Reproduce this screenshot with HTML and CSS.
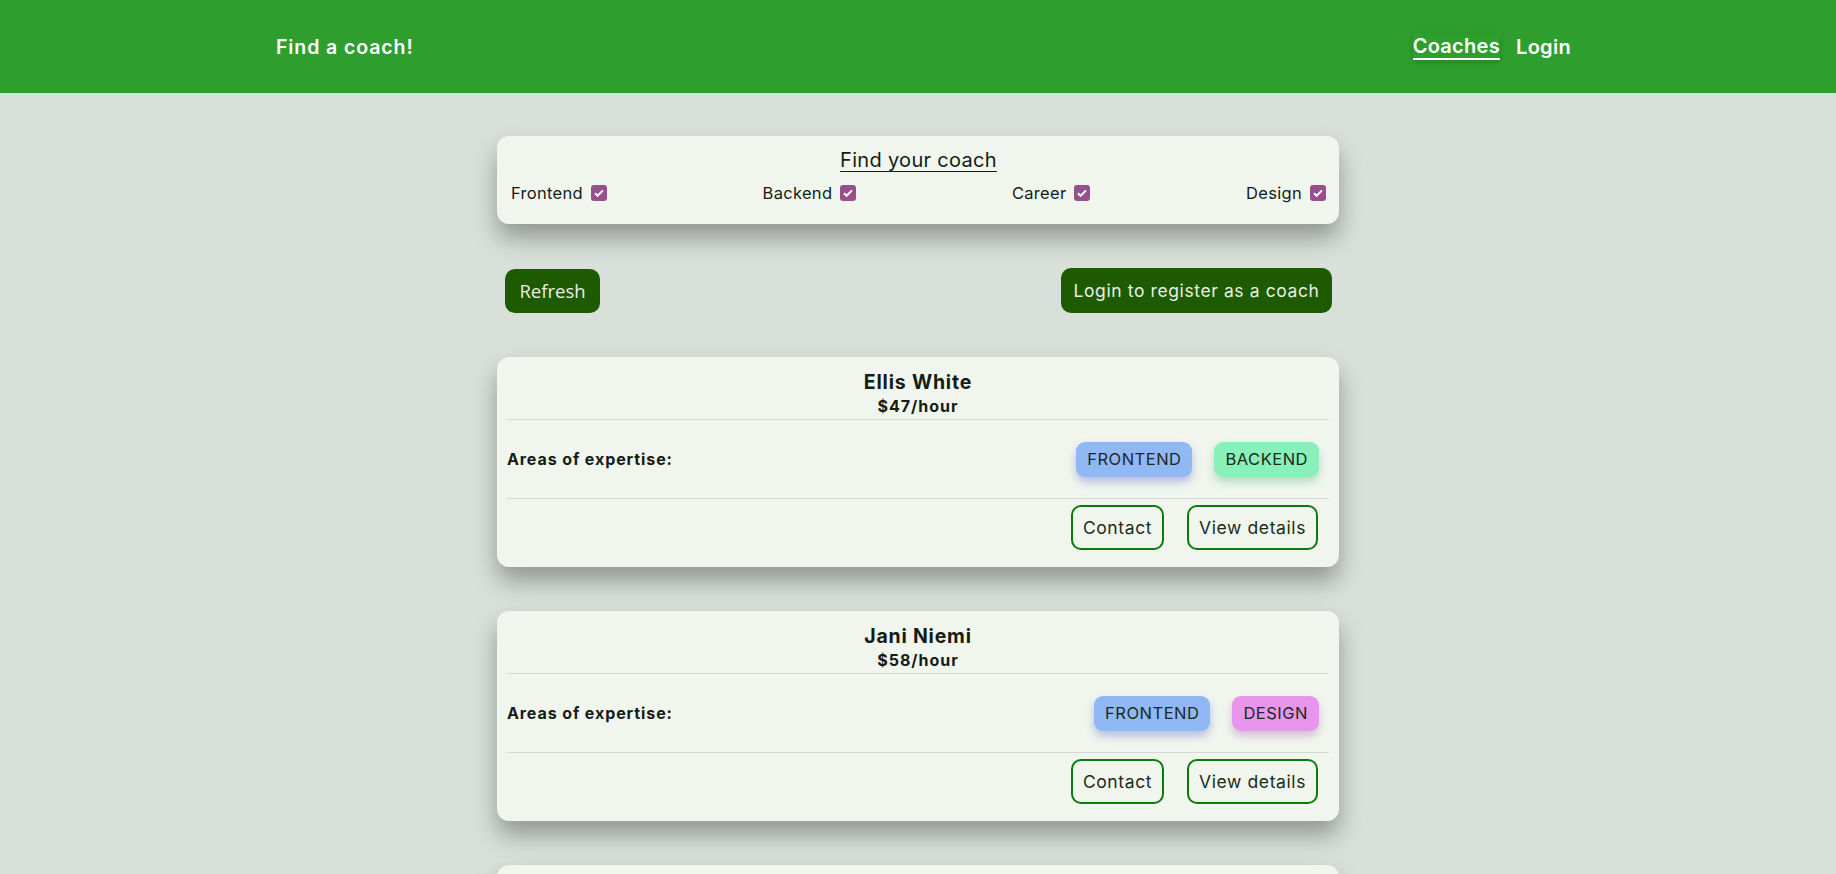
FILE: index.html
```html
<!DOCTYPE html>
<html lang="en">
<head>
<meta charset="utf-8">
<title>Find a coach</title>
<link rel="stylesheet" href="styles.css">
</head>
<body>
<header class="site-header">
  <h1 class="brand">Find a coach!</h1>
  <nav class="nav">
    <a class="nav-link active" href="#">Coaches</a>
    <a class="nav-link" href="#">Login</a>
  </nav>
</header>
<main class="main">
  <section class="card filter">
    <h2 class="filter-title">Find your coach</h2>
    <div class="filter-row">
      <label class="filter-item">Frontend <span class="check"><svg viewBox="0 0 16 16"><path d="M4 8.2l2.6 2.6L12 5.4" fill="none" stroke="#fff" stroke-width="2"/></svg></span></label>
      <label class="filter-item">Backend <span class="check"><svg viewBox="0 0 16 16"><path d="M4 8.2l2.6 2.6L12 5.4" fill="none" stroke="#fff" stroke-width="2"/></svg></span></label>
      <label class="filter-item">Career <span class="check"><svg viewBox="0 0 16 16"><path d="M4 8.2l2.6 2.6L12 5.4" fill="none" stroke="#fff" stroke-width="2"/></svg></span></label>
      <label class="filter-item">Design <span class="check"><svg viewBox="0 0 16 16"><path d="M4 8.2l2.6 2.6L12 5.4" fill="none" stroke="#fff" stroke-width="2"/></svg></span></label>
    </div>
  </section>

  <div class="controls">
    <button class="btn-solid btn-refresh">Refresh</button>
    <a class="btn-solid btn-login" href="#">Login to register as a coach</a>
  </div>

  <section class="card coach">
    <div class="coach-head">
      <h3 class="coach-name">Ellis White</h3>
      <h4 class="coach-rate">$47/hour</h4>
    </div>
    <div class="coach-areas">
      <span class="areas-label">Areas of expertise:</span>
      <div class="badges">
        <span class="badge frontend">FRONTEND</span>
        <span class="badge backend">BACKEND</span>
      </div>
    </div>
    <div class="coach-actions">
      <a class="btn-outline" href="#">Contact</a>
      <a class="btn-outline" href="#">View details</a>
    </div>
  </section>

  <section class="card coach">
    <div class="coach-head">
      <h3 class="coach-name">Jani Niemi</h3>
      <h4 class="coach-rate">$58/hour</h4>
    </div>
    <div class="coach-areas">
      <span class="areas-label">Areas of expertise:</span>
      <div class="badges">
        <span class="badge frontend">FRONTEND</span>
        <span class="badge design">DESIGN</span>
      </div>
    </div>
    <div class="coach-actions">
      <a class="btn-outline" href="#">Contact</a>
      <a class="btn-outline" href="#">View details</a>
    </div>
  </section>

  <section class="card coach">
    <div class="coach-head">
      <h3 class="coach-name">Kim Hall</h3>
      <h4 class="coach-rate">$40/hour</h4>
    </div>
    <div class="coach-areas">
      <span class="areas-label">Areas of expertise:</span>
      <div class="badges">
        <span class="badge career">CAREER</span>
      </div>
    </div>
    <div class="coach-actions">
      <a class="btn-outline" href="#">Contact</a>
      <a class="btn-outline" href="#">View details</a>
    </div>
  </section>
</main>
</body>
</html>
```

FILE: styles.css
```css
* { box-sizing: border-box; }

html, body {
  margin: 0;
  padding: 0;
}

body {
  background: #d9e0da;
  font-family: "Inter", "DejaVu Sans", sans-serif;
  color: #141c14;
  overflow: hidden;
  height: 874px;
}

.site-header {
  height: 93px;
  background: #2e9e2e;
  display: flex;
  align-items: center;
  justify-content: space-between;
  padding: 0 265px 0 276px;
}

.brand {
  margin: 0;
  font-size: 19.5px;
  font-weight: 600;
  color: #ffffff;
  letter-spacing: 0.9px;
}

.nav {
  display: flex;
  gap: 16px;
  align-items: center;
}

.nav-link {
  color: #ffffff;
  text-decoration: none;
  font-size: 20px;
  font-weight: 600;
  padding: 2px 0 0;
  line-height: 23px;
  letter-spacing: 0.3px;
}

.nav-link.active {
  border-bottom: 2px solid #ffffff;
  box-shadow: 0 2px 6px rgba(0, 0, 0, 0.18);
}

.main {
  width: 842px;
  margin: 0 auto;
  padding-top: 43px;
  display: flex;
  flex-direction: column;
  gap: 44px;
}

.card {
  background: #f0f6ed;
  border-radius: 12px;
  box-shadow: 0 14px 24px rgba(0, 0, 0, 0.33);
}

.filter {
  height: 88px;
  padding: 11px 13px 0 14px;
}

.filter-title {
  margin: 0;
  text-align: center;
  font-size: 20px;
  font-weight: 400;
  text-decoration: underline;
  text-underline-offset: 4px;
  text-decoration-thickness: 1px;
  line-height: 26px;
  letter-spacing: 0.3px;
}

.filter-row {
  display: flex;
  justify-content: space-between;
  margin-top: 9px;
}

.filter-item {
  display: flex;
  align-items: center;
  gap: 8px;
  font-size: 16.5px;
  line-height: 22px;
  letter-spacing: 0.3px;
}

.check {
  width: 16px;
  height: 16px;
  border-radius: 3px;
  background: #96508e;
  display: inline-flex;
}

.check svg {
  width: 16px;
  height: 16px;
}

.controls {
  display: flex;
  justify-content: space-between;
  align-items: center;
  padding: 0 7px 0 8px;
  height: 45px;
}

.btn-solid {
  background: #1e5a00;
  color: #e6f0e2;
  border: none;
  border-radius: 10px;
  text-decoration: none;
  display: inline-flex;
  align-items: center;
  justify-content: center;
}

.btn-refresh {
  width: 95px;
  height: 44px;
  font-family: "Open Sans", "Noto Sans", sans-serif;
  font-size: 18.5px;
}

.btn-login {
  width: 271px;
  height: 45px;
  font-size: 17.5px;
  letter-spacing: 0.6px;
}

.coach {
  height: 210px;
  padding: 0 10px;
}

.coach-head {
  text-align: center;
  padding-top: 14px;
  height: 63px;
  border-bottom: 1px solid #d3d8d1;
}

.coach-name {
  margin: 0;
  font-size: 19.5px;
  font-weight: 700;
  line-height: 22px;
  letter-spacing: 0.8px;
}

.coach-rate {
  margin: 3px 0 0;
  font-size: 16px;
  font-weight: 700;
  line-height: 20px;
  letter-spacing: 1px;
}

.coach-areas {
  height: 79px;
  display: flex;
  align-items: center;
  justify-content: space-between;
  border-bottom: 1px solid #d3d8d1;
  padding-right: 10px;
}

.areas-label {
  font-size: 16px;
  font-weight: 700;
  letter-spacing: 0.9px;
}

.badges {
  display: flex;
  gap: 22px;
}

.badge {
  height: 35px;
  padding: 0 11px;
  display: inline-flex;
  align-items: center;
  border-radius: 9px;
  font-size: 16.5px;
  letter-spacing: 0.5px;
  color: #1a2a1a;
}

.badge.frontend {
  background: #8fb8f5;
  box-shadow: 0 5px 8px rgba(70, 80, 200, 0.35);
}

.badge.backend {
  background: #88f0b8;
  box-shadow: 0 5px 8px rgba(40, 160, 90, 0.3);
}

.badge.design {
  background: #e895ee;
  box-shadow: 0 5px 8px rgba(150, 60, 160, 0.3);
}

.badge.career {
  background: #f5d88f;
  box-shadow: 0 5px 8px rgba(170, 130, 40, 0.3);
}

.coach-actions {
  display: flex;
  justify-content: flex-end;
  gap: 23px;
  padding: 6px 11px 0 0;
}

.btn-outline {
  height: 45px;
  padding: 0 10px;
  border: 2px solid #0a7a0a;
  border-radius: 10px;
  color: #1a2a1a;
  text-decoration: none;
  font-size: 17.5px;
  letter-spacing: 0.6px;
  display: inline-flex;
  align-items: center;
}
```
